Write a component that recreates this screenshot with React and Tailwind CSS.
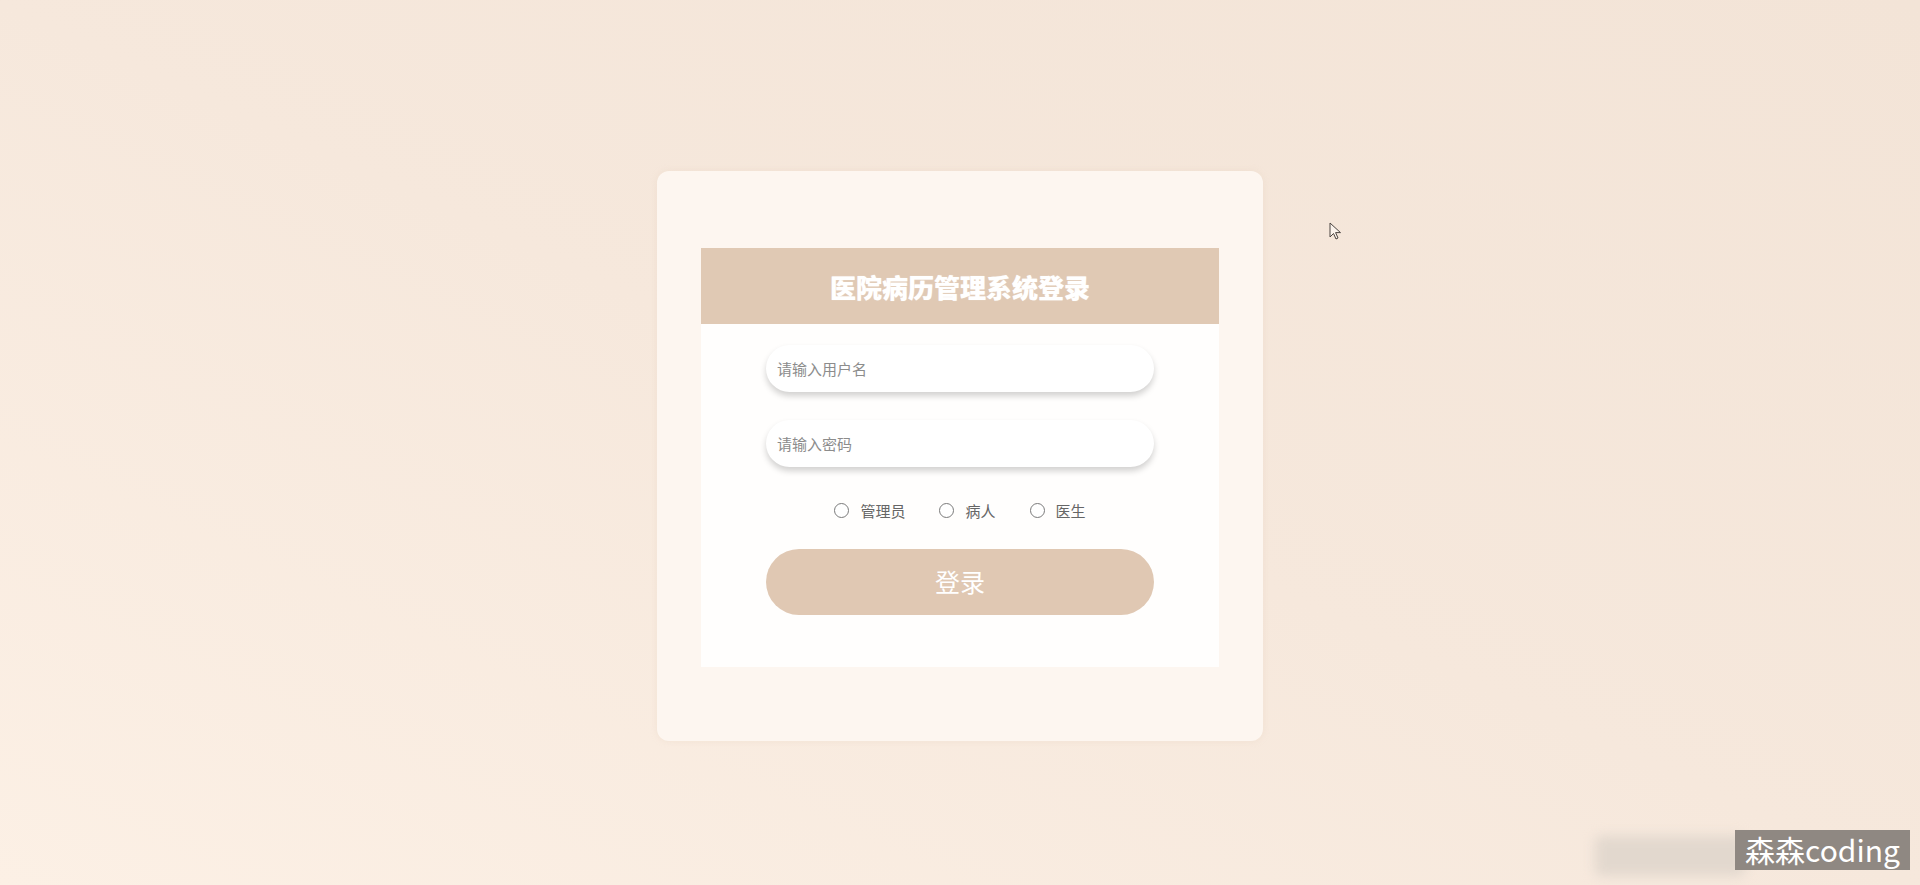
import React, { useState } from "react";

const roles = [
    { value: "admin", label: "管理员" },
    { value: "patient", label: "病人" },
    { value: "doctor", label: "医生" },
];

function Cursor() {
    return (
        <svg
            width="14"
            height="20"
            viewBox="0 0 14 20"
            className="absolute left-[1329px] top-[222px]"
        >
            <path
                d="M1 1 L1 15 L4.5 11.5 L7 17 L9 16 L6.6 10.6 L11.5 10.6 Z"
                fill="#fbf3ec"
                stroke="#4a4440"
                strokeWidth="1"
                strokeLinejoin="round"
            />
        </svg>
    );
}

export default function App() {
    const [form, setForm] = useState({ username: "", password: "", role: "" });

    return (
        <div
            className="relative h-[885px] w-full overflow-hidden bg-linear-to-tr from-[#fcf0e5] via-[#f6e8dc] to-[#f3e4d7]"
            style={{ fontFamily: '"Noto Sans CJK SC", "Noto Sans", sans-serif' }}
        >
            <div className="flex justify-center pt-[171px]">
                {/* outer card */}
                <div className="w-[606px] rounded-[12px] bg-[#fdf6f0] px-[44px] pt-[77px] pb-[74px] shadow-[0_0_6px_rgba(230,210,190,0.35)]">
                    <div className="bg-[#fffefd]">
                        {/* header */}
                        <div className="flex h-[76px] items-center justify-center bg-[#e0c9b4]">
                            <h1 className="text-[26px] font-black text-white [text-shadow:0_0_1px_rgba(255,255,255,0.6)]">
                                医院病历管理系统登录
                            </h1>
                        </div>

                        {/* form */}
                        <form className="flex flex-col items-center pt-[21px] pb-[52px]">
                            <input
                                type="text"
                                placeholder="请输入用户名"
                                value={form.username}
                                onChange={(e) => setForm({ ...form, username: e.target.value })}
                                className="h-[47px] w-[388px] rounded-[24px] bg-white px-[11px] text-[15px] text-[#555] shadow-[0_4px_6px_rgba(0,0,0,0.18)] outline-none placeholder:text-[#8c8c8c]"
                            />
                            <input
                                type="password"
                                placeholder="请输入密码"
                                value={form.password}
                                onChange={(e) => setForm({ ...form, password: e.target.value })}
                                className="mt-[28px] h-[47px] w-[388px] rounded-[24px] bg-white px-[11px] text-[15px] text-[#555] shadow-[0_4px_6px_rgba(0,0,0,0.18)] outline-none placeholder:text-[#8c8c8c]"
                            />

                            <div className="mt-[33px] flex h-[20px] items-center gap-[34px]">
                                {roles.map((r) => (
                                    <label
                                        key={r.value}
                                        className="flex cursor-pointer items-center gap-[11px] text-[15px] leading-none text-[#666]"
                                    >
                                        <span
                                            onClick={() => setForm({ ...form, role: r.value })}
                                            className={`h-[15px] w-[15px] rounded-full border ${
                                                form.role === r.value
                                                    ? "border-[#c9a98c] bg-[#c9a98c]"
                                                    : "border-[#7a7a7a] bg-white"
                                            }`}
                                        />
                                        <span>{r.label}</span>
                                    </label>
                                ))}
                            </div>

                            <button
                                type="button"
                                className="mt-[29px] h-[66px] w-[388px] rounded-full bg-[#e0c8b3] text-[25px] text-white"
                            >
                                登录
                            </button>
                        </form>
                    </div>
                </div>
            </div>

            <Cursor />

            {/* watermark */}
            <div className="absolute left-[1595px] top-[836px] h-[40px] w-[150px] rounded-[6px] bg-[#e2d8ce] blur-[6px]" />
            <div className="absolute left-[1735px] top-[830px] flex h-[40px] w-[175px] items-center justify-center bg-[#8f8882] text-[30px] leading-none text-white">
                <span className="-mt-[3px]">森森coding</span>
            </div>
        </div>
    );
}
